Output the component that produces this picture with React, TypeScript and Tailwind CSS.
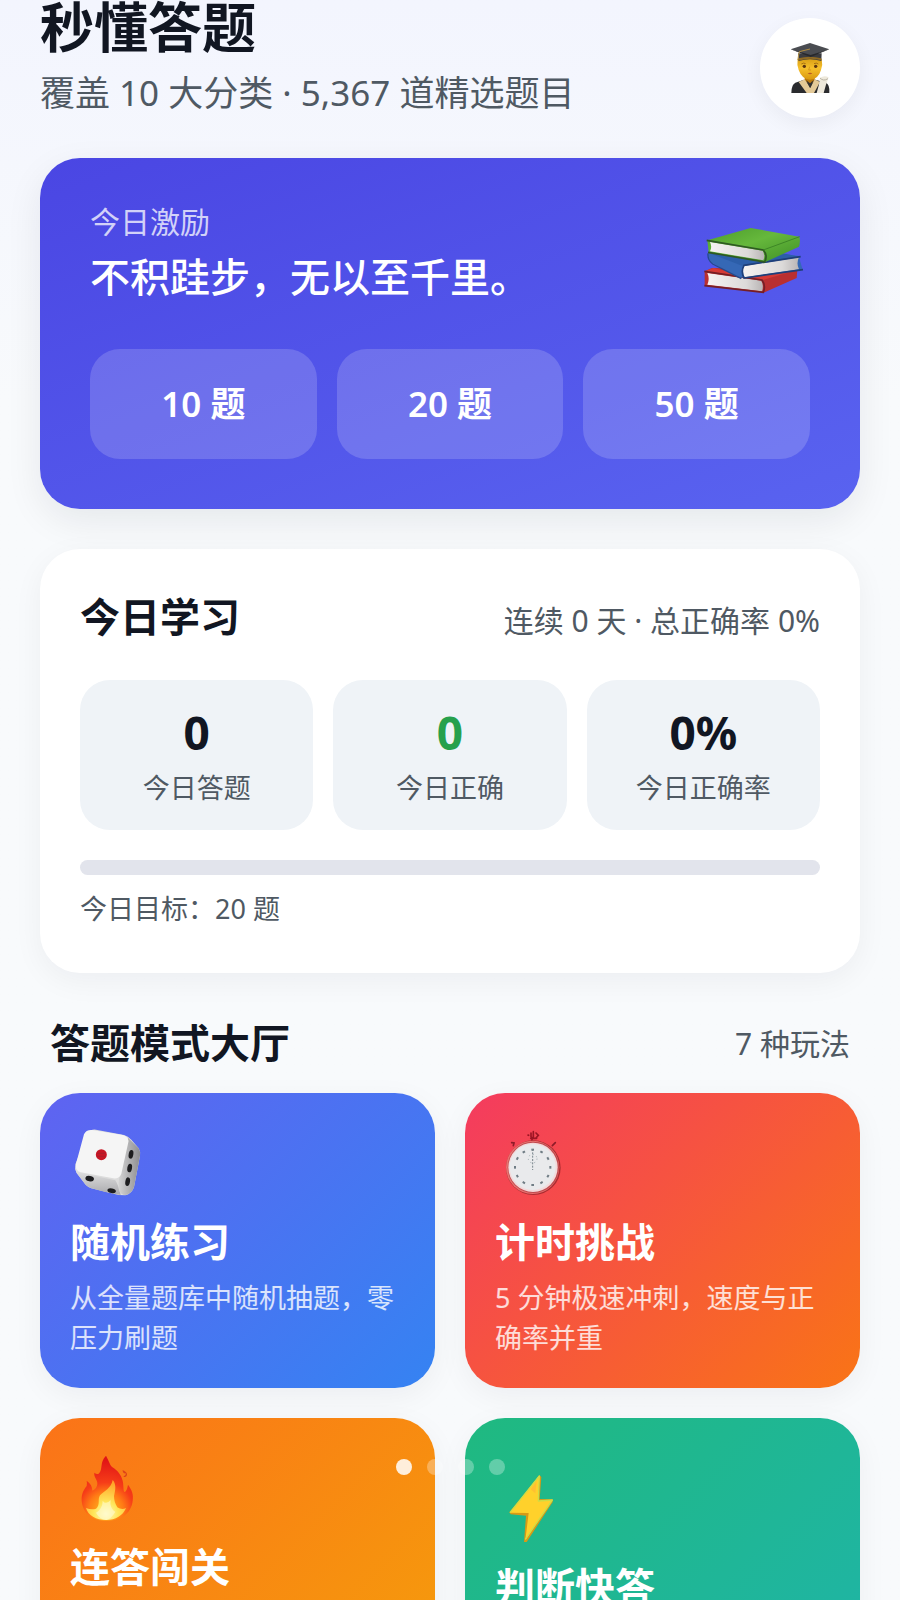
import { useState } from "react";
import type { ReactNode } from "react";
import clsx from "clsx";

const GraduateIcon = () => (
  <svg viewBox="135 127 150 150" className="h-[50px] w-[50px]" aria-hidden="true">
    <defs>
      <linearGradient id="face" x1="0" y1="0" x2="0" y2="1">
        <stop offset="0" stopColor="#d2960f" />
        <stop offset="0.5" stopColor="#f6c02c" />
        <stop offset="1" stopColor="#d9980f" />
      </linearGradient>
    </defs>
    <path d="M154 277 Q154 252 166 246 L192 237 H226 L258 246 Q270 252 268 277 Z" fill="#2a2b2e" />
    <path d="M194 212 H224 V240 L209 254 L194 240 Z" fill="#b9780d" />
    <path d="M194 236 L176 244 L200 277 H222 L240 244 L224 236 L211 262 Z" fill="#e3c997" />
    <path d="M198 238 L210 262 L221 238 L210 248 Z" fill="#333" />
    <path d="M173 176 Q170 192 176 208 Q186 236 210 237 Q235 236 243 208 Q249 192 245 176 Q210 160 173 176 Z" fill="url(#face)" />
    <path d="M184 190 q7 -5 13 -1 M222 189 q7 -4 13 1" stroke="#9a6410" strokeWidth="2.5" fill="none" />
    <ellipse cx="193" cy="197" rx="5" ry="5" fill="#5b3410" />
    <ellipse cx="227" cy="197" rx="5" ry="5" fill="#5b3410" />
    <path d="M209 198 l-3 10 h7" stroke="#c98712" strokeWidth="2" fill="none" />
    <path d="M203 218 q7 -4 14 0 q-7 6 -14 0 Z" fill="#b85a26" />
    <path d="M174 158 L176 181 Q210 170 244 181 L245 158 Z" fill="#3a3b3f" />
    <path d="M175 173 Q210 163 244 173 V179 Q210 169 176 180 Z" fill="#8f6a23" />
    <path d="M152 146 L210 127 L268 146 L212 166 Z" fill="#4a4c51" />
    <path d="M152 146 L212 163 L268 146 L212 169 Z" fill="#27282b" />
    <path d="M210 145 L178 153 L173 178" stroke="#c69b3e" strokeWidth="2.5" fill="none" />
    <path d="M240 232 Q252 223 266 230 Q258 250 251 277 H230 Q238 253 240 232 Z" fill="#eee9dc" />
    <path d="M240 232 Q250 243 264 234" stroke="#b9b3a3" strokeWidth="3" fill="none" />
  </svg>
);

const BooksIcon = () => (
  <svg viewBox="60 70 330 220" className="mt-[18px] w-[110px]" aria-hidden="true">
    <defs>
      <linearGradient id="green" x1="0" y1="0" x2="1" y2="1">
        <stop offset="0" stopColor="#4c9c2c" />
        <stop offset="0.45" stopColor="#66b83c" />
        <stop offset="1" stopColor="#3f9026" />
      </linearGradient>
      <linearGradient id="pages" x1="0" y1="0" x2="1" y2="0">
        <stop offset="0" stopColor="#f6f3f2" />
        <stop offset="0.7" stopColor="#dcdad9" />
        <stop offset="1" stopColor="#b9b5b5" />
      </linearGradient>
    </defs>
    {/* red */}
    <path d="M74 212 L96 202 L352 207 L350 232 L254 275 L74 254 Z" fill="#b92f30" />
    <path d="M74 212 L100 202 L200 225 L350 208 L246 239 Z" fill="#d63a35" />
    <path d="M82 217 L244 240 Q252 254 246 272 L82 252 Q90 234 82 217 Z" fill="url(#pages)" />
    <path d="M73 212 L246 238 Q258 254 250 275 L73 255" stroke="#751f25" strokeWidth="5" fill="none" />
    {/* blue */}
    <path d="M84 158 L92 184 L178 232 L368 207 L356 166 L240 150 Z" fill="#3568b6" />
    <path d="M84 156 L188 196 L358 168 L260 148 Z" fill="#2c5ea9" />
    <path d="M192 196 L357 170 Q348 188 357 206 L194 230 Q184 212 192 196 Z" fill="url(#pages)" />
    <path d="M362 168 L192 194 Q182 212 192 232 L369 207" stroke="#1f3f79" strokeWidth="5" fill="none" />
    <path d="M84 158 Q82 178 98 190 L184 234" stroke="#244b8c" strokeWidth="4" fill="none" />
    {/* green */}
    <path d="M82 119 L212 82 L358 108 Q362 122 357 138 L256 184 L86 154 Z" fill="url(#green)" />
    <path d="M90 124 L248 150 Q257 164 250 179 L90 152 Q97 138 90 124 Z" fill="url(#pages)" />
    <path d="M80 119 L250 148 Q264 164 254 184 L84 155" stroke="#2f5a22" strokeWidth="5" fill="none" />
    <path d="M250 148 L359 108" stroke="#3d8726" strokeWidth="3" fill="none" />
  </svg>
);

const DiceIcon = () => (
  <svg viewBox="30 48 216 216" className="h-[72px] w-[72px]" aria-hidden="true">
    <defs>
      <linearGradient id="diceSide" x1="0" y1="0" x2="1" y2="0">
        <stop offset="0" stopColor="#d4d4d4" />
        <stop offset="1" stopColor="#8d8d90" />
      </linearGradient>
      <linearGradient id="diceFront" x1="0" y1="0" x2="0" y2="1">
        <stop offset="0" stopColor="#ececec" />
        <stop offset="1" stopColor="#a9a9ac" />
      </linearGradient>
    </defs>
    <path d="M84 66 Q92 54 108 56 L192 72 Q204 76 214 86 L236 112 Q242 122 240 134 L222 228 Q216 248 196 253 L176 252 L94 232 Q78 226 70 212 L50 186 Q44 174 46 160 Z" fill="#dcdcdc" />
    <path d="M46 164 Q48 186 72 188 L166 208 Q176 224 182 252 Q140 246 94 232 Q80 226 70 212 L50 186 Q45 176 46 164 Z" fill="url(#diceFront)" />
    <path d="M204 80 L236 112 Q242 122 240 134 L222 228 Q216 246 198 252 Q180 252 176 234 Q174 216 178 198 Z" fill="url(#diceSide)" />
    <path d="M72 70 Q78 56 96 57 L188 72 Q210 78 204 98 L184 188 Q178 204 160 202 L62 184 Q44 178 48 158 Z" fill="#f5f5f5" />
    <circle cx="124" cy="131" r="16.5" fill="#c81625" />
    <path d="M111 127 h25 M111 136 h25" stroke="#9c2630" strokeWidth="2" />
    <ellipse cx="89" cy="203" rx="13" ry="8" transform="rotate(12 89 203)" fill="#1d1d1f" />
    <ellipse cx="155" cy="239" rx="13" ry="7" transform="rotate(12 155 239)" fill="#1d1d1f" />
    <ellipse cx="213" cy="130" rx="7" ry="13" transform="rotate(10 213 130)" fill="#1d1d1f" />
    <ellipse cx="209" cy="171" rx="7" ry="13" transform="rotate(10 209 171)" fill="#1d1d1f" />
    <ellipse cx="203" cy="212" rx="7" ry="13" transform="rotate(10 203 212)" fill="#1d1d1f" />
  </svg>
);

const StopwatchIcon = () => (
  <svg viewBox="45 48 216 216" className="h-[72px] w-[72px]" aria-hidden="true">
    <path d="M156 92 V80 M144 72 l2 1 M153 66 v12 M160 62 v18 M168 66 l7 7 l-7 8 M152 82 h18" stroke="#9c1524" strokeWidth="5" strokeLinecap="round" fill="none" />
    <path d="M95 95 l7 1 l-2 8 M217 104 l9 -9" stroke="#8e1c28" strokeWidth="5" strokeLinecap="round" fill="none" />
    <circle cx="160" cy="170" r="82" fill="#ac2c31" />
    <circle cx="158" cy="169" r="80" fill="#e8716f" />
    <circle cx="160" cy="169" r="77" fill="#c04a4e" />
    <circle cx="159" cy="169" r="74" fill="#f3d9da" />
    <circle cx="158" cy="168" r="69" fill="#e9eaec" />
    {Array.from({ length: 12 }, (_, i) => (
      <path key={i} d="M154 116 h8" stroke="#6f7c84" strokeWidth="6" transform={`rotate(${i * 30} 158 169)`} />
    ))}
    <path d="M158 114 V177" stroke="#78848b" strokeWidth="3" strokeDasharray="6 4" />
    <circle cx="158" cy="143" r="13" fill="none" stroke="#98a4aa" strokeWidth="3" strokeDasharray="3 9" />
  </svg>
);

const FireIcon = () => (
  <svg viewBox="30 64 216 216" className="h-[72px] w-[72px]" aria-hidden="true">
    <defs>
      <radialGradient id="flame" gradientUnits="userSpaceOnUse" cx="138" cy="238" r="150">
        <stop offset="0" stopColor="#ffc21f" />
        <stop offset="0.35" stopColor="#ff7a15" />
        <stop offset="0.55" stopColor="#f63d18" />
        <stop offset="1" stopColor="#e11416" />
      </radialGradient>
      <radialGradient id="core" gradientUnits="userSpaceOnUse" cx="138" cy="250" r="105">
        <stop offset="0" stopColor="#fff9c4" />
        <stop offset="0.35" stopColor="#ffe65a" />
        <stop offset="1" stopColor="#ff981f" />
      </radialGradient>
    </defs>
    <path d="M138 75 C150 96 148 104 162 113 C180 126 190 145 190 166 C191 176 190 180 193 184 C200 182 202 172 204 162 C216 178 221 192 218 210 C214 250 178 271 139 271 C98 271 68 248 65 210 C64 188 72 176 80 166 Q82 158 80 150 C92 158 97 168 97 180 C104 178 112 170 112 158 C112 146 101 140 103 126 Q110 132 116 129 C130 116 118 94 138 75 Z" fill="url(#flame)" />
    <path d="M188 118 q0 12 10 10 q0 8 -8 10 q8 4 11 -5 q2 -8 -13 -15 Z" fill="#dc431a" />
    <path d="M158 148 C170 160 166 180 162 196 C162 210 166 220 172 230 C182 236 190 236 198 232 C190 254 166 268 139 268 C108 268 84 254 78 232 Q94 238 108 234 C122 224 112 204 120 194 C132 182 154 172 158 148 Z" fill="url(#core)" />
    <path d="M128 210 Q138 224 152 208 Q148 232 166 244 Q152 266 138 268 Q118 265 108 246 Q128 234 128 210 Z" fill="#fffbd0" opacity="0.6" />
  </svg>
);

const BoltIcon = () => (
  <svg viewBox="345 124 216 216" className="h-[72px] w-[72px]" aria-hidden="true">
    <path d="M479 134 L484 139 L479 205 L517 206 L518 214 L440 334 L432 334 L438 255 L392 251 L388 245 Z" fill="#d79a16" />
    <path d="M478 134 L475 211 L518 207 L436 328 L446 247 L390 246 Z" fill="#ffd12b" />
    <path d="M390 246 L478 136 L475 211 L517 208 L436 326" stroke="#cfdc45" strokeWidth="4" strokeLinejoin="round" fill="none" />
    <path d="M470 150 L466 188 L452 176 Z" fill="#ffbf32" />
  </svg>
);

const modes = [
  { title: "随机练习", desc: "从全量题库中随机抽题，零压力刷题", icon: <DiceIcon />, bg: "bg-linear-135/srgb from-[#5f63f1] to-[#3583f2]" },
  { title: "计时挑战", desc: "5 分钟极速冲刺，速度与正确率并重", icon: <StopwatchIcon />, bg: "bg-linear-135/srgb from-[#f43b5f] to-[#f97416]" },
  { title: "连答闯关", desc: "连续答对即可不断闯关，答错一题就结束", icon: <FireIcon />, bg: "bg-linear-135/srgb from-[#fb7318] to-[#f59e0b]" },
  { title: "判断快答", desc: "对错二选一快速判断", icon: <BoltIcon />, bg: "bg-linear-135/srgb from-[#1fb980] to-[#1fb4a8]" },
];

const stats = [
  { label: "今日答题", val: "0", color: "text-[#111622]" },
  { label: "今日正确", val: "0", color: "text-[#26a04c]" },
  { label: "今日正确率", val: "0%", color: "text-[#111622]" },
];

const ModeCard = ({ title, desc, icon, bg }: { title: string; desc: string; icon: ReactNode; bg: string }) => (
  <button
    type="button"
    className={clsx("flex flex-col justify-center rounded-[40px] p-[30px] text-left text-white shadow-[0_8px_30px_rgba(15,23,42,0.05)]", bg)}
  >
    <span className="flex h-20 items-center">{icon}</span>
    <span className="mt-[9px] text-[40px] leading-[60px] font-semibold">{title}</span>
    <span className="mt-[6px] text-[27px] leading-[40px] text-white/80">{desc}</span>
  </button>
);

const App = () => {
  const [slide, setSlide] = useState(0);

  return (
    <div className="h-screen overflow-hidden bg-linear-to-b from-[#f3f5fe] via-[#f8fafc] via-25% to-[#f8fafc] px-10 font-['Noto_Sans','Noto_Sans_CJK_SC',sans-serif] text-[#111622]">
      <header className="flex items-end justify-between">
        <div>
          <h1 className="text-[54px] leading-[50px] font-bold">秒懂答题</h1>
          <p className="mt-4 text-[35px] leading-[50px] text-[#4f5963]">覆盖 10 大分类 · 5,367 道精选题目</p>
        </div>
        <button
          type="button"
          aria-label="个人中心"
          className="mt-[18px] flex h-[100px] w-[100px] items-center justify-center rounded-full bg-white shadow-[0_6px_20px_rgba(15,23,42,0.05)]"
        >
          <GraduateIcon />
        </button>
      </header>

      {/* Daily quote */}
      <section className="mt-10 rounded-[40px] bg-linear-160/srgb from-[#4a46e3] to-[#5963f0] px-[50px] pt-[42px] pb-[50px] text-white shadow-[0_12px_36px_rgba(15,23,42,0.08)]">
        <div className="flex items-center justify-between">
          <div>
            <p className="text-[30px] leading-[44px] text-white/75">今日激励</p>
            <p className="mt-[6px] text-[40px] leading-[54px] font-medium">不积跬步，无以至千里。</p>
          </div>
          <BooksIcon />
        </div>
        <div className="mt-[45px] grid grid-cols-3 gap-5">
          {[10, 20, 50].map((n) => (
            <button key={n} type="button" className="h-[110px] rounded-[30px] bg-white/17 text-[35px] font-semibold">
              {n} 题
            </button>
          ))}
        </div>
      </section>

      {/* Today */}
      <section className="mt-10 rounded-[40px] bg-white px-10 pt-[38px] pb-[44px] shadow-[0_8px_30px_rgba(15,23,42,0.05)]">
        <div className="flex items-baseline justify-between">
          <h2 className="text-[40px] leading-[60px] font-semibold">今日学习</h2>
          <p className="text-[30px] text-[#4f5963]">连续 0 天 · 总正确率 0%</p>
        </div>
        <div className="mt-[33px] grid grid-cols-3 gap-5">
          {stats.map((s) => (
            <div key={s.label} className="flex h-[150px] flex-col items-center rounded-[30px] bg-[#eff3f7] pt-[22px]">
              <p className={clsx("text-[46px] leading-[60px] font-bold", s.color)}>{s.val}</p>
              <p className="mt-[6px] text-[27px] leading-[40px] text-[#4f5963]">{s.label}</p>
            </div>
          ))}
        </div>
        <div role="progressbar" aria-label="今日目标" aria-valuenow={0} aria-valuemax={20} className="mt-[30px] h-[15px] rounded-full bg-[#e2e4ec]" />
        <p className="mt-[14px] text-[27px] leading-[40px] text-[#4f5963]">今日目标：20 题</p>
      </section>

      {/* Modes */}
      <div className="mt-10 mb-5 flex items-center justify-between px-[10px]">
        <h2 className="text-[40px] leading-[60px] font-semibold">答题模式大厅</h2>
        <p className="text-[30px] text-[#4f5963]">7 种玩法</p>
      </div>
      <div className="grid grid-cols-2 gap-[30px]">
        {modes.map((m) => (
          <ModeCard key={m.title} {...m} />
        ))}
      </div>

      <div className="fixed inset-x-0 bottom-[125px] flex justify-center gap-[15px]">
        {[0, 1, 2, 3].map((i) => (
          <button
            key={i}
            type="button"
            aria-label={`第 ${i + 1} 页`}
            onClick={() => setSlide(i)}
            className={clsx("h-4 w-4 rounded-full", i === slide ? "bg-white/85" : "bg-white/30")}
          />
        ))}
      </div>
    </div>
  );
};

export default App;
